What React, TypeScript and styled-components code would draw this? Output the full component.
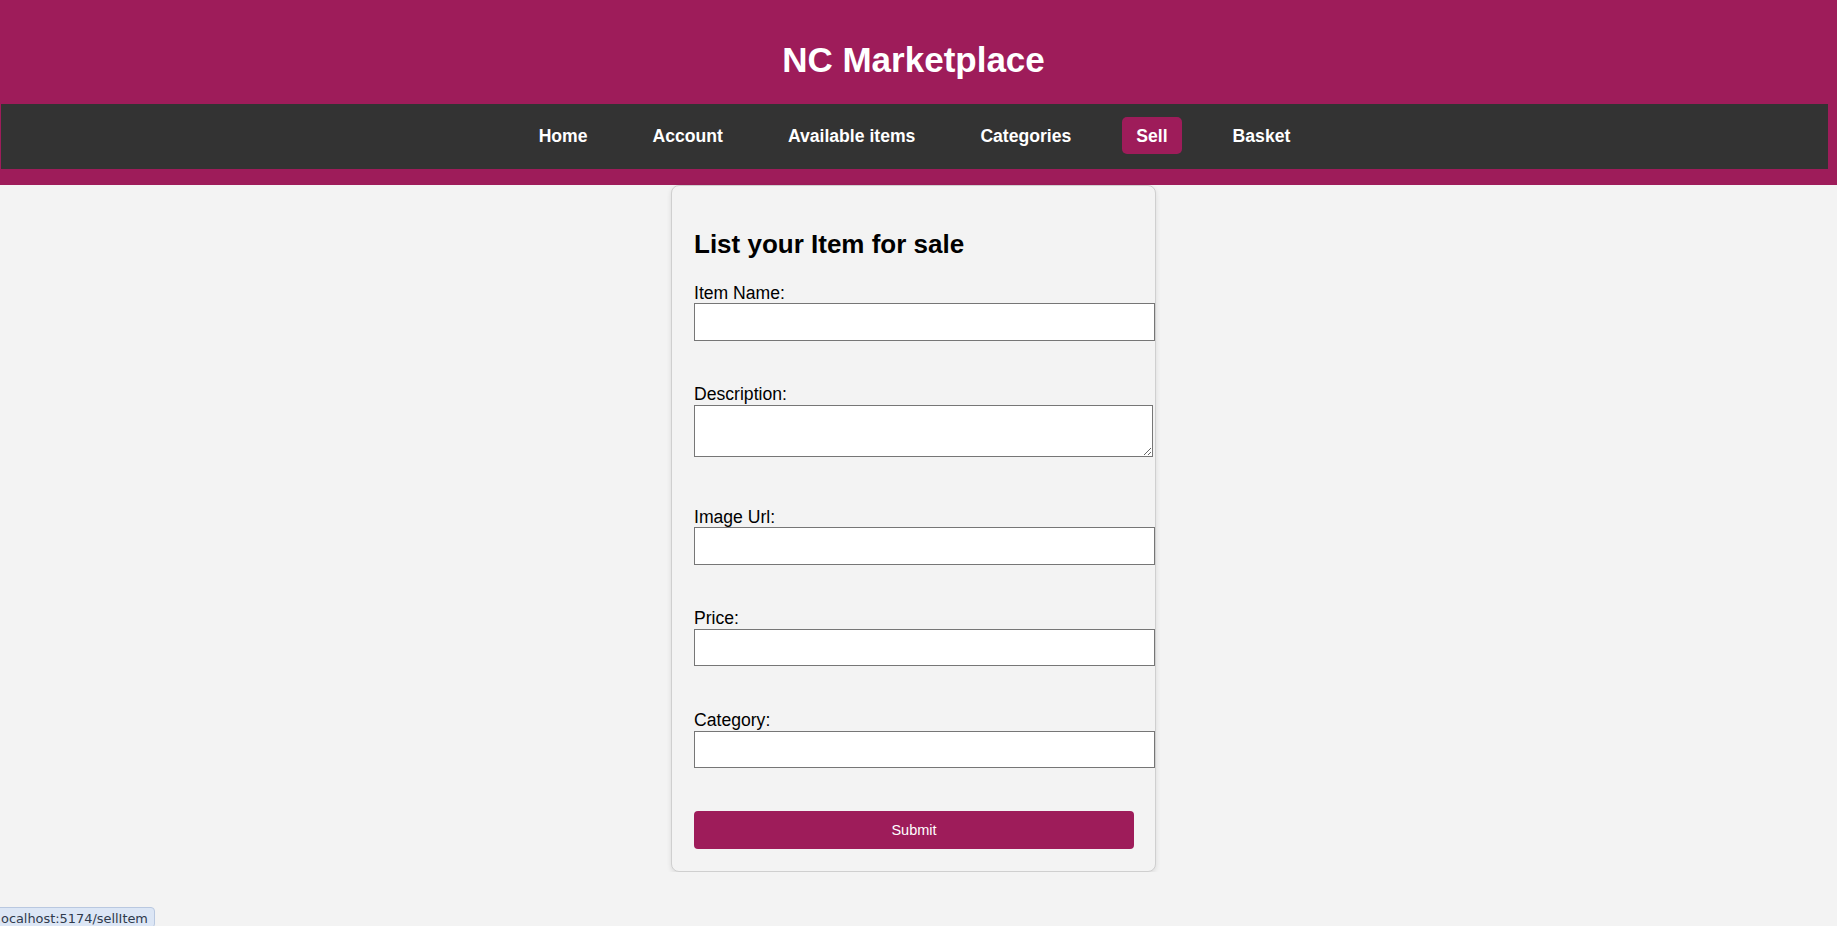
import React from "react";
import styled, { createGlobalStyle } from "styled-components";

const GlobalStyle = createGlobalStyle`
  html, body {
    margin: 0;
    padding: 0;
    background: #f3f3f3;
    font-family: "Liberation Sans", Arial, sans-serif;
    color: #000;
  }
  * { box-sizing: content-box; }
`;

const BRAND = "#9e1c5a";

const Header = styled.header`
  background: ${BRAND};
  padding: 40px 0 16px;
  text-align: center;
`;

const Title = styled.h1`
  margin: 0 10px 24px 0;
  font-size: 35px;
  line-height: 40px;
  font-weight: bold;
  color: #fff;
`;

const Nav = styled.nav`
  background: #333;
  height: 63px;
  padding-bottom: 2px;
  margin: 0 9px 0 1px;
  display: flex;
  align-items: center;
  justify-content: center;
  gap: 37px;
`;

const NavLink = styled.a<{ $active?: boolean }>`
  color: #fff;
  font-weight: bold;
  font-size: 17.6px;
  line-height: 20px;
  padding: 8.5px 14px;
  border-radius: 5px;
  text-decoration: none;
  background: ${(p) => (p.$active ? BRAND : "transparent")};
  cursor: pointer;
`;

const Main = styled.main`
  padding-right: 10px;
`;

const Card = styled.section`
  width: 439px;
  margin: 0 auto;
  padding: 22px 22px 22px;
  border: 1px solid #cfcfcf;
  border-radius: 8px;
  background: #f3f3f3;
  box-shadow: 0 2px 5px rgba(0, 0, 0, 0.1);
`;

const Heading = styled.h2`
  margin: 21.6px 0;
  font-size: 26px;
  line-height: 29.9px;
  font-weight: bold;
`;

const Form = styled.form`
  display: block;
`;

const Label = styled.label`
  display: block;
  font-size: 17.6px;
  line-height: 20.2px;
  padding-top: 1.5px;
  margin-bottom: 0.5px;
`;

const Input = styled.input`
  display: block;
  width: 100%;
  height: 15.5px;
  padding: 10px;
  margin: 0 0 42px;
  border: 1px solid #767676;
  border-radius: 0;
  background: #fff;
  font-family: "Liberation Sans", Arial, sans-serif;
  font-size: 13.33px;
  outline: none;
`;

const TextArea = styled.textarea`
  display: block;
  width: 100%;
  height: 32px;
  padding: 9px;
  margin: 0 0 48px;
  border: 1px solid #767676;
  border-radius: 0;
  background: #fff;
  font-family: "Liberation Mono", monospace;
  font-size: 13.33px;
  resize: both;
  outline: none;
`;

const Submit = styled.button`
  display: block;
  width: 440px;
  height: 38px;
  margin-top: 43px;
  padding: 0;
  border: none;
  border-radius: 4px;
  background: ${BRAND};
  color: #fff;
  font-family: "Liberation Sans", Arial, sans-serif;
  font-size: 14.5px;
  cursor: pointer;
`;

const StatusBubble = styled.div`
  position: fixed;
  left: -6px;
  bottom: -2px;
  padding: 2px 6px 0 6px;
  background: #dce6f5;
  border: 1px solid #b9c8e0;
  border-radius: 4px;
  color: #2f3a4c;
  font-family: "DejaVu Sans", sans-serif;
  font-size: 12.9px;
  line-height: 17px;
  white-space: nowrap;
`;

const links = ["Home", "Account", "Available items", "Categories", "Sell", "Basket"];

export default function App() {
  return (
    <>
      <GlobalStyle />
      <Header>
        <Title>NC Marketplace</Title>
        <Nav>
          {links.map((l) => (
            <NavLink key={l} $active={l === "Sell"}>
              {l}
            </NavLink>
          ))}
        </Nav>
      </Header>
      <Main>
        <Card>
          <Heading>List your Item for sale</Heading>
          <Form onSubmit={(e) => e.preventDefault()}>
            <Label htmlFor="name">Item Name:</Label>
            <Input id="name" type="text" />
            <Label htmlFor="desc">Description:</Label>
            <TextArea id="desc" />
            <Label htmlFor="img">Image Url:</Label>
            <Input id="img" type="text" />
            <Label htmlFor="price">Price:</Label>
            <Input id="price" type="text" />
            <Label htmlFor="cat">Category:</Label>
            <Input id="cat" type="text" style={{ marginBottom: 0 }} />
            <Submit type="submit">Submit</Submit>
          </Form>
        </Card>
      </Main>
      <StatusBubble>ocalhost:5174/sellItem</StatusBubble>
    </>
  );
}
